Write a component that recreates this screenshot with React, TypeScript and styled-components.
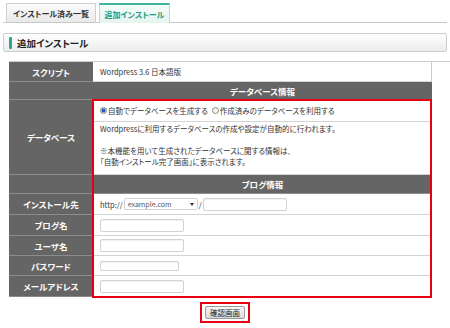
import styled, { createGlobalStyle } from "styled-components";

const GlobalStyle = createGlobalStyle`
  body {
    margin: 0;
    background: #fff;
    color: #333;
    font-family: "Noto Sans CJK JP", "Noto Sans", sans-serif;
    font-feature-settings: "palt";
  }
`;

const Page = styled.div`
  width: 450px;
  height: 328px;
  padding-top: 3px;
  box-sizing: border-box;
  overflow: hidden;
`;

const TabBar = styled.div`
  display: flex;
  align-items: flex-end;
  gap: 3px;
  margin-left: 3px;
  padding-left: 3px;
  width: 441px;
  height: 19px;
  border-bottom: 1px solid #c8c8c8;
`;

const Tab = styled.div<{ active?: boolean }>`
  box-sizing: border-box;
  height: ${(p) => (p.active ? "20px" : "19px")};
  margin-bottom: ${(p) => (p.active ? "-1px" : "0")};
  width: ${(p) => (p.active ? "71px" : "90px")};
  display: flex;
  align-items: center;
  justify-content: center;
  font-size: 8px;
  font-weight: bold;
  border: 1px solid #cfcfcf;
  border-bottom: none;
  border-top: ${(p) => (p.active ? "2px solid #3db49b" : "1px solid #cfcfcf")};
  color: ${(p) => (p.active ? "#1f9d84" : "#333")};
  background: ${(p) =>
    p.active
      ? "linear-gradient(#f4fbf9, #e6f5f0)"
      : "linear-gradient(#fbfbfb, #e9e9e9)"};
`;

const TitleBar = styled.div`
  box-sizing: border-box;
  margin: 10px 3px 0;
  height: 19px;
  display: flex;
  align-items: center;
  padding-left: 5px;
  border: 1px solid #cdcdcd;
  border-radius: 2px;
  background: linear-gradient(#ffffff, #ececec);
  font-size: 9.5px;
  font-weight: bold;
  color: #222;
`;

const TitleMark = styled.span`
  width: 3px;
  height: 12px;
  margin-right: 5px;
  background: #2aa78b;
  border-radius: 1px;
`;

const Table = styled.div`
  display: grid;
  grid-template-columns: 84px 339px;
  grid-template-rows: 20px 18px 22px 53px 19px 21px 21px 20px 20px 21px;
  margin: 9px 0 0 9px;
  border-top: 1px solid #cccccc;
  font-size: 7.5px;
`;

const Label = styled.div<{ row: string }>`
  grid-column: 1;
  grid-row: ${(p) => p.row};
  display: flex;
  align-items: center;
  justify-content: center;
  background: #656565;
  color: #fff;
  font-weight: bold;
  font-size: 8.5px;
  border-bottom: 1px solid #8c8c8c;
`;

const Cell = styled.div<{ row: number }>`
  grid-column: 2;
  grid-row: ${(p) => p.row};
  display: flex;
  align-items: center;
  gap: 1px;
  padding-left: 7px;
  background: #fff;
  border-right: 1px solid #cccccc;
  border-bottom: 1px solid #d4d4d4;
`;

const Section = styled.div<{ row: number }>`
  grid-column: 2;
  grid-row: ${(p) => p.row};
  display: flex;
  align-items: center;
  justify-content: center;
  background: #656565;
  color: #fff;
  font-weight: bold;
  font-size: 8.5px;
  border-bottom: 1px solid #8c8c8c;
`;

const Note = styled.div<{ row: number }>`
  grid-column: 2;
  grid-row: ${(p) => p.row};
  padding: 1px 7px 0;
  line-height: 11px;
  background: #fff;
  border-right: 1px solid #cccccc;
  border-bottom: 1px solid #d4d4d4;
`;

const Highlight = styled.div`
  grid-column: 2;
  grid-row: 3 / 11;
  margin: -1px 0 -1px -1px;
  border: 2px solid #e60012;
  pointer-events: none;
  z-index: 1;
`;

const Radio = styled.span<{ checked?: boolean }>`
  box-sizing: border-box;
  width: 7px;
  height: 7px;
  margin-right: 1px;
  border-radius: 50%;
  border: 1px solid #8a8a8a;
  background: ${(p) =>
    p.checked
      ? "radial-gradient(circle, #1f5fb8 0 1.6px, #9cc3ec 2px)"
      : "#f4f4f4"};
`;

const Choice = styled.label`
  display: flex;
  align-items: center;
  margin-right: 3px;
`;

const FakeSelect = styled.div`
  box-sizing: border-box;
  width: 74px;
  height: 12px;
  display: flex;
  align-items: center;
  justify-content: space-between;
  padding: 0 3px 0 3px;
  border: 1px solid #d0d0d0;
  border-radius: 2px;
  font-size: 7px;
  color: #555;
  &::after {
    content: "";
    border-left: 2.5px solid transparent;
    border-right: 2.5px solid transparent;
    border-top: 3px solid #333;
  }
`;

const Field = styled.input<{ w: number; h?: number }>`
  box-sizing: border-box;
  width: ${(p) => p.w}px;
  height: ${(p) => p.h ?? 13}px;
  margin: 0;
  padding: 0;
  border: 1px solid #d2d2d2;
  border-radius: 2px;
  background: #fff;
  box-shadow: inset 0 1px 1px #f0f0f0;
`;

const Footer = styled.div`
  display: flex;
  justify-content: center;
  margin-top: 5px;
`;

const ButtonFrame = styled.div`
  display: flex;
  padding: 2px 3px;
  border: 2px solid #e60012;
`;

const Button = styled.button`
  box-sizing: border-box;
  width: 40px;
  height: 13px;
  padding: 0;
  font-family: inherit;
  font-size: 7.5px;
  line-height: 1;
  color: #222;
  border: 1px solid #9a9a9a;
  border-radius: 2px;
  background: linear-gradient(#f7f7f7, #d9d9d9);
`;

export default function App() {
  return (
    <Page>
      <GlobalStyle />
      <TabBar>
        <Tab>インストール済み一覧</Tab>
        <Tab active>追加インストール</Tab>
      </TabBar>

      <TitleBar>
        <TitleMark />
        追加インストール
      </TitleBar>

      <Table>
        <Label row="1">スクリプト</Label>
        <Cell row={1}>Wordpress 3.6 日本語版</Cell>

        <Label row="2" />
        <Section row={2}>データベース情報</Section>

        <Label row="3 / 5">データベース</Label>
        <Cell row={3}>
          <Choice>
            <Radio checked />
            自動でデータベースを生成する
          </Choice>
          <Choice>
            <Radio />
            作成済みのデータベースを利用する
          </Choice>
        </Cell>
        <Note row={4}>
          Wordpressに利用するデータベースの作成や設定が自動的に行われます。
          <br />
          <br />
          ※本機能を用いて生成されたデータベースに関する情報は、
          <br />
          「自動インストール完了画面」に表示されます。
        </Note>

        <Label row="5" />
        <Section row={5}>ブログ情報</Section>

        <Label row="6">インストール先</Label>
        <Cell row={6}>
          http://
          <FakeSelect>example.com</FakeSelect>/
          <Field w={84} />
        </Cell>

        <Label row="7">ブログ名</Label>
        <Cell row={7}>
          <Field w={84} />
        </Cell>

        <Label row="8">ユーザ名</Label>
        <Cell row={8}>
          <Field w={84} />
        </Cell>

        <Label row="9">パスワード</Label>
        <Cell row={9}>
          <Field w={79} h={10} type="password" />
        </Cell>

        <Label row="10">メールアドレス</Label>
        <Cell row={10}>
          <Field w={84} />
        </Cell>

        <Highlight />
      </Table>

      <Footer>
        <ButtonFrame>
          <Button>確認画面</Button>
        </ButtonFrame>
      </Footer>
    </Page>
  );
}
